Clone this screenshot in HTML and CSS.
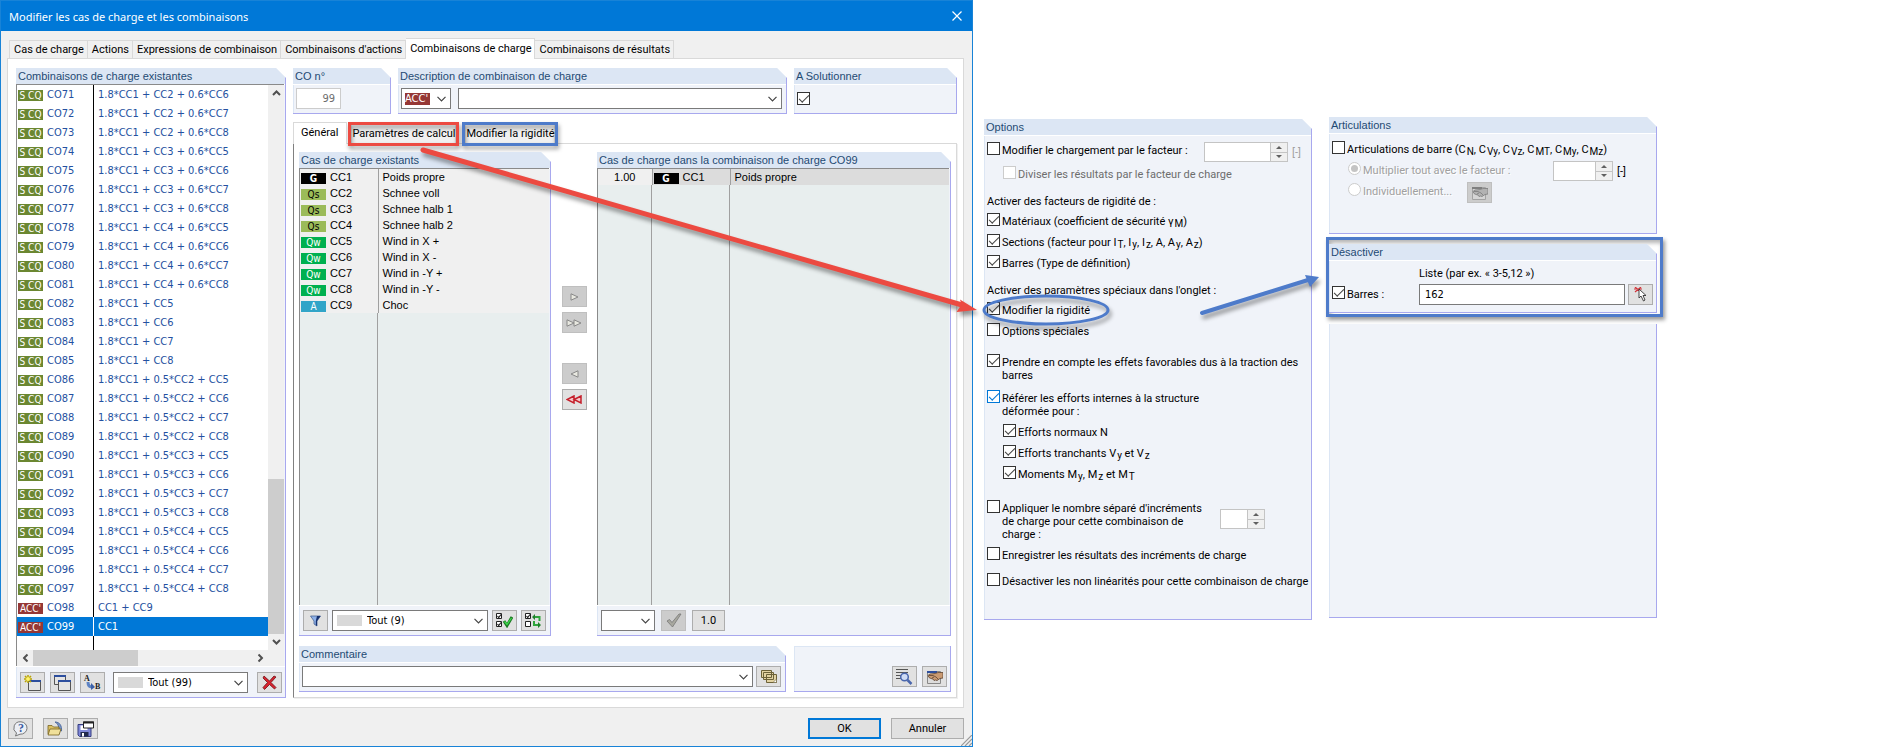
FILE: index.html
```
<!DOCTYPE html>
<html lang="fr">
<head>
    <meta charset="UTF-8">
    <meta name="viewport" content="width=device-width, initial-scale=1.0">
    <title>Modifier les cas de charge et les combinaisons</title>
    <link rel="stylesheet" href="styles.css">
</head>
<body>
    <!-- Shared icon shapes -->
    <svg class="sprite" aria-hidden="true">
        <symbol id="chevron" viewBox="0 0 9 6"><path d="M.5 .8 4.5 4.8 8.5 .8" fill="none" stroke="#444" stroke-width="1.2"/></symbol>
        <symbol id="arrow" viewBox="0 0 9 6"><path d="M1 5 4.5 1.5 8 5" fill="none" stroke="#505050" stroke-width="2"/></symbol>
        <symbol id="hand" viewBox="0 0 17 16">
            <path d="M1.500 2.500h13v12h-13z" fill="#dcdcdc" stroke="#888"/>
            <path d="M1 2h10v2H1z" fill="#2d4f9e"/>
            <path d="M17 3.500v5.500l-3 .5-3 2-1.500-.5-1.500.5-1-1.500-2-.5L3 8.500 2 6.500 4 5l5-.5 3-1z" fill="#c99a72" stroke="#5d4330" stroke-width=".8"/>
            <path d="M3 6.500h4l3 1.500 2 2M6 9l2-1" fill="none" stroke="#5d4330" stroke-width=".8"/>
        </symbol>
    </svg>

    <div class="page">
        <div class="dialog">
            <div class="title-bar">
                <h1>Modifier les cas de charge et les combinaisons</h1>
                <button class="close-btn" aria-label="Fermer">
                    <svg width="10" height="10" viewBox="0 0 10 10"><path d="M.5 .5 9.500 9.500M9.500 .5 .5 9.500" stroke="#fff" stroke-width="1.200"/></svg>
                </button>
            </div>

            <div class="tabs main-tabs">
                <button class="tab">Cas de charge</button>
                <button class="tab">Actions</button>
                <button class="tab">Expressions de combinaison</button>
                <button class="tab">Combinaisons d'actions</button>
                <button class="tab active">Combinaisons de charge</button>
                <button class="tab">Combinaisons de résultats</button>
            </div>

            <div class="pane">
                <section class="group">
                    <h2>Combinaisons de charge existantes</h2>
                    <div class="combo-list">
                        <div class="combo-view">
                            <table class="combo-table"><tbody id="combo-rows"></tbody></table>
                        </div>
                        <div class="scroll-v">
                            <button class="scroll-btn" aria-label="Haut"><svg width="9" height="6"><use href="#arrow"/></svg></button>
                            <div class="track-v"><div class="thumb-v"></div></div>
                            <button class="scroll-btn flip" aria-label="Bas"><svg width="9" height="6"><use href="#arrow"/></svg></button>
                        </div>
                        <div class="scroll-h">
                            <button class="scroll-btn turn-left" aria-label="Gauche"><svg width="9" height="6"><use href="#arrow"/></svg></button>
                            <div class="track-h"><div class="thumb-h"></div></div>
                            <button class="scroll-btn turn-right" aria-label="Droite"><svg width="9" height="6"><use href="#arrow"/></svg></button>
                        </div>
                    </div>
                    <div class="toolbar combo-toolbar">
                        <button class="icon-btn" aria-label="Nouvelle combinaison">
                            <svg width="17" height="16" viewBox="0 0 17 16"><path d="M4.500 5.500h12v10h-12z" fill="#e4e4e4" stroke="#555"/><path d="M4 5h13v2H4z" fill="#2d4f9e"/><path d="M4 0v8M0 4h8M1 1l6 6M7 1 1 7" stroke="#b9a300" stroke-width="1.500"/><circle cx="4" cy="4" r="2" fill="#fff36b"/></svg>
                        </button>
                        <button class="icon-btn" aria-label="Copier">
                            <svg width="17" height="16" viewBox="0 0 17 16"><path d="M.5 .5h11v9H.5z" fill="#e4e4e4" stroke="#555"/><path d="M0 0h12v2H0z" fill="#2d4f9e"/><path d="M4.500 5.500h12v10h-12z" fill="#e4e4e4" stroke="#555"/><path d="M4 5h13v2H4z" fill="#2d4f9e"/></svg>
                        </button>
                        <button class="icon-btn" aria-label="Renuméroter">
                            <svg width="19" height="19" viewBox="0 0 19 19"><text x="1" y="8" class="glyph">A</text><text x="12" y="16" class="glyph">B</text><path d="M5 9c0 4 2 5 4 5" fill="none" stroke="#5d83c4" stroke-width="3"/><path d="m8 10 4 4-4 3z" fill="#3a60a8"/></svg>
                        </button>
                        <label class="combo filter-combo"><span class="swatch"></span>
                            <select aria-label="Filtre des combinaisons"><option>Tout (99)</option></select>
                            <svg class="chevron" width="9" height="6"><use href="#chevron"/></svg>
                        </label>
                        <button class="icon-btn" aria-label="Supprimer">
                            <svg width="15" height="15" viewBox="0 0 15 15"><path d="m2 1 5.500 5L12 1l2 1-5 5.500 5 5-1.500 1.500-5-4.500-5 5L1 12.500l4.500-5L1 3z" fill="#d8232e" stroke="#6d1217" stroke-width=".8"/></svg>
                        </button>
                    </div>
                </section>

                <div class="details">
                    <div class="top-row">
                        <section class="group">
                            <h2><label for="co-number">CO n°</label></h2>
                            <div class="field-row"><input id="co-number" class="text-input number" value="99" disabled></div>
                        </section>
                        <section class="group">
                            <h2>Description de combinaison de charge</h2>
                            <div class="field-row">
                                <label class="combo code-combo">
                                    <select class="code-select" aria-label="Type"><option>ACC'</option></select>
                                    <svg class="chevron" width="9" height="6"><use href="#chevron"/></svg>
                                </label>
                                <label class="combo fill">
                                    <input aria-label="Description">
                                    <svg class="chevron" width="9" height="6"><use href="#chevron"/></svg>
                                </label>
                            </div>
                        </section>
                        <section class="group">
                            <h2><label for="solve">A Solutionner</label></h2>
                            <div class="field-row solve-row"><input type="checkbox" id="solve" checked></div>
                        </section>
                    </div>

                    <div class="tabs inner-tabs">
                        <button class="tab active">Général</button>
                        <button class="tab mark-red">Paramètres de calcul</button>
                        <button class="tab mark-blue">Modifier la rigidité</button>
                    </div>

                    <div class="inner-pane">
                        <div class="cases">
                            <section class="group">
                                <h2>Cas de charge existants</h2>
                                <div class="case-view two-cols">
                                    <table class="case-table"><tbody id="case-rows"></tbody></table>
                                </div>
                                <div class="toolbar">
                                    <button class="icon-btn" aria-label="Filtrer">
                                        <svg width="11" height="12" viewBox="0 0 11 12"><path d="M.5 1h10L7 6v5l-3-2V6z" fill="#8fb2ea" stroke="#4a6496" stroke-width=".8"/><path d="M7 1h3.500L7 6v5l-1.200-.8V6z" fill="#17306d"/></svg>
                                    </button>
                                    <label class="combo fill"><span class="swatch"></span>
                                        <select aria-label="Filtre des cas de charge"><option>Tout (9)</option></select>
                                        <svg class="chevron" width="9" height="6"><use href="#chevron"/></svg>
                                    </label>
                                    <button class="icon-btn" aria-label="Tout sélectionner">
                                        <svg width="17" height="15" viewBox="0 0 17 15"><path d="M.5 .5h5v5h-5zM.5 8.500h5v5h-5z" fill="#fff" stroke="#222"/><path d="m1.500 3 1.200 1.500L5 1.500M1.500 11l1.200 1.500L5 9.500" fill="none" stroke="#222" stroke-width="1.200"/><path d="m8 8 3 4.500L16 4" fill="none" stroke="#1c7a24" stroke-width="3"/><path d="m8.500 8.500 2.500 3L15.500 5" fill="none" stroke="#3ddb4c" stroke-width="1.200"/></svg>
                                    </button>
                                    <button class="icon-btn" aria-label="Inverser la sélection">
                                        <svg width="17" height="15" viewBox="0 0 17 15"><path d="M.5 .5h5v5h-5zM.5 8.500h5v5h-5z" fill="#fff" stroke="#222"/><path d="m1.500 3 1.200 1.500L5 1.500" fill="none" stroke="#222" stroke-width="1.200"/><path d="M9 4h5.500v4M14.500 12H9V8" fill="none" stroke="#2fa53c" stroke-width="2"/><path d="M10 1 7 4l3 3zM13 9l3 3-3 3z" fill="#1f7f2b"/></svg>
                                    </button>
                                </div>
                            </section>

                            <div class="transfer">
                                <button class="icon-btn" disabled aria-label="Ajouter"><svg width="9" height="8" viewBox="0 0 9 8"><path d="M1 .8 8 4 1 7.200z" fill="#e8e8e0" stroke="#888"/></svg></button>
                                <button class="icon-btn" disabled aria-label="Tout ajouter"><svg width="16" height="8" viewBox="0 0 16 8"><path d="M1 .8 8 4 1 7.200zM8 .8 15 4 8 7.200z" fill="#e8e8e0" stroke="#888"/></svg></button>
                                <button class="icon-btn back" disabled aria-label="Retirer"><svg width="9" height="8" viewBox="0 0 9 8"><path d="M8 .8 1 4l7 3.200z" fill="#e8e8e0" stroke="#888"/></svg></button>
                                <button class="icon-btn" aria-label="Tout retirer"><svg width="16" height="9" viewBox="0 0 16 9"><path d="M8 1 1 4.500 8 8zM15 1 8 4.500 15 8z" fill="#f6c9cb" stroke="#c5202c" stroke-width="1.500"/></svg></button>
                            </div>

                            <section class="group">
                                <h2>Cas de charge dans la combinaison de charge CO99</h2>
                                <div class="case-view three-cols">
                                    <table class="case-table">
                                        <tbody>
                                            <tr class="current">
                                                <td class="factor">1.00</td>
                                                <td class="case-id"><span class="badge g">G</span>CC1</td>
                                                <td>Poids propre</td>
                                            </tr>
                                        </tbody>
                                    </table>
                                </div>
                                <div class="toolbar factor-toolbar">
                                    <label class="combo factor-combo">
                                        <select aria-label="Facteur"><option></option></select>
                                        <svg class="chevron" width="9" height="6"><use href="#chevron"/></svg>
                                    </label>
                                    <button class="icon-btn" disabled aria-label="Appliquer">
                                        <svg width="16" height="15" viewBox="0 0 16 15"><path d="m1 8 2.500-1.500L6 9.500 13 1h2L6.500 14z" fill="#a8a89f" stroke="#777" stroke-width=".8"/></svg>
                                    </button>
                                    <button class="icon-btn factor-btn">1.0</button>
                                </div>
                            </section>
                        </div>

                        <div class="comment-row">
                            <section class="group">
                                <h2><label for="comment">Commentaire</label></h2>
                                <div class="field-row comment-field">
                                    <div class="combo fill">
                                        <input id="comment">
                                        <svg class="chevron" width="9" height="6"><use href="#chevron"/></svg>
                                    </div>
                                    <button class="icon-btn" aria-label="Commentaires enregistrés">
                                        <svg width="16" height="13" viewBox="0 0 16 13"><path d="M.5 .5h10v7H.5zM2.500 2.500h10v7h-10zM5.500 4.500h10v8h-10z" fill="#e3d3a2" stroke="#6d6238"/><path d="m12 12.500 3.500-3.500v3.500z" fill="#fff" stroke="#6d6238" stroke-width=".6"/></svg>
                                    </button>
                                </div>
                            </section>
                            <section class="group actions-group">
                                <button class="icon-btn" aria-label="Détails">
                                    <svg width="17" height="16" viewBox="0 0 17 16"><path d="M0 .5h12M0 3.500h12M0 6.500h6M0 9.500h5" stroke="#555"/><circle cx="8.500" cy="8" r="3.800" fill="#cfdcf5" stroke="#4a67ad" stroke-width="1.500"/><path d="m11.500 11 4 4" stroke="#4a67ad" stroke-width="2.500"/></svg>
                                </button>
                                <button class="icon-btn" aria-label="Modifier"><svg width="17" height="16"><use href="#hand"/></svg></button>
                            </section>
                        </div>
                    </div>
                </div>
            </div>

            <div class="bottom-bar">
                <button class="icon-btn help-btn" aria-label="Aide">
                    <svg width="16" height="16" viewBox="0 0 16 16"><path d="M8 .8a6.500 6.200 0 1 1-1 12.400L2.500 15l1-3A6.500 6.200 0 0 1 8 .8z" fill="#eceff5" stroke="#777"/><text x="5" y="11" class="glyph help-mark">?</text></svg>
                </button>
                <button class="icon-btn" aria-label="Ouvrir">
                    <svg width="17" height="16" viewBox="0 0 17 16"><path d="M8 1c5 0 7 4 6.500 9l-3-1C12 5 11 2.500 8 1z" fill="#7c98c9" stroke="#3d5c93" stroke-width=".8"/><path d="M1 4.500h4l1.500 1.500H12v7H1z" fill="#d9bf62" stroke="#776322" stroke-width=".8"/><path d="M3 8h11l-2 6H1z" fill="#f0e09a" stroke="#776322" stroke-width=".8"/></svg>
                </button>
                <button class="icon-btn" aria-label="Enregistrer">
                    <svg width="17" height="16" viewBox="0 0 17 16"><path d="M1 3.500h13v12H2.500L1 14z" fill="#8088d8" stroke="#343c80"/><path d="M3.500 11h8v4.500h-8z" fill="#222b4c"/><path d="M5 12h2v3.500H5z" fill="#fff"/><path d="M3.500 4.500h7V9h-7z" fill="#fff"/><path d="M6.500 1h10v6h-10z" fill="#fff" stroke="#222"/><path d="M6 .5h11v2H6z" fill="#222"/></svg>
                </button>
                <button class="text-btn default">OK</button>
                <button class="text-btn">Annuler</button>
                <svg class="grip" width="11" height="11" viewBox="0 0 11 11"><path d="M0 11 11 0M4 11l7-7M8 11l3-3" stroke="#999" stroke-width="1.200"/></svg>
            </div>
        </div>

        <section class="group options">
            <h2>Options</h2>
            <div class="options-body">
                <div class="option-row factor-row">
                    <label class="check"><input type="checkbox"><span>Modifier le chargement par le facteur :</span></label>
                    <div class="spinner"><input aria-label="Facteur de chargement" disabled><div class="steps"><button disabled aria-label="Plus"></button><button disabled aria-label="Moins"></button></div></div>
                    <span class="unit">[-]</span>
                </div>
                <label class="check nested muted tight"><input type="checkbox" disabled><span>Diviser les résultats par le facteur de charge</span></label>

                <p>Activer des facteurs de rigidité de :</p>
                <label class="check"><input type="checkbox" checked><span>Matériaux (coefficient de sécurité γ<sub>M</sub>)</span></label>
                <label class="check"><input type="checkbox" checked><span>Sections (facteur pour I<sub>T</sub>, I<sub>y</sub>, I<sub>z</sub>, A, A<sub>y</sub>, A<sub>z</sub>)</span></label>
                <label class="check"><input type="checkbox" checked><span>Barres (Type de définition)</span></label>

                <p>Activer des paramètres spéciaux dans l'onglet :</p>
                <label class="check"><input type="checkbox" checked><span>Modifier la rigidité</span></label>
                <label class="check"><input type="checkbox"><span>Options spéciales</span></label>

                <label class="check gap"><input type="checkbox" checked><span>Prendre en compte les effets favorables dus à la traction des<br>barres</span></label>
                <label class="check loose"><input type="checkbox" class="hot" checked><span>Référer les efforts internes à la structure<br>déformée pour :</span></label>
                <label class="check nested"><input type="checkbox" checked><span>Efforts normaux N</span></label>
                <label class="check nested"><input type="checkbox" checked><span>Efforts tranchants V<sub>y</sub> et V<sub>z</sub></span></label>
                <label class="check nested"><input type="checkbox" checked><span>Moments M<sub>y</sub>, M<sub>z</sub> et M<sub>T</sub></span></label>

                <div class="option-row increments">
                    <label class="check"><input type="checkbox"><span>Appliquer le nombre séparé d'incréments<br>de charge pour cette combinaison de<br>charge :</span></label>
                    <div class="spinner small"><input aria-label="Nombre d'incréments" disabled><div class="steps"><button disabled aria-label="Plus"></button><button disabled aria-label="Moins"></button></div></div>
                </div>
                <label class="check"><input type="checkbox"><span>Enregistrer les résultats des incréments de charge</span></label>
                <label class="check gap-s"><input type="checkbox"><span>Désactiver les non linéarités pour cette combinaison de charge</span></label>
            </div>
        </section>

        <div class="side">
            <section class="group hinges">
                <h2>Articulations</h2>
                <div class="hinges-body">
                    <label class="check"><input type="checkbox"><span>Articulations de barre (C<sub>N</sub>, C<sub>Vy</sub>, C<sub>Vz</sub>, C<sub>MT</sub>, C<sub>My</sub>, C<sub>Mz</sub>)</span></label>
                    <div class="option-row hinge-row">
                        <label class="check nested disabled"><input type="radio" name="hinge" checked disabled><span>Multiplier tout avec le facteur :</span></label>
                        <div class="spinner medium"><input aria-label="Facteur des articulations" disabled><div class="steps"><button disabled aria-label="Plus"></button><button disabled aria-label="Moins"></button></div></div>
                        <span class="unit">[-]</span>
                    </div>
                    <div class="option-row hinge-row single">
                        <label class="check nested disabled"><input type="radio" name="hinge" disabled><span>Individuellement...</span></label>
                        <button class="icon-btn" disabled aria-label="Modifier individuellement"><svg class="grey" width="17" height="16"><use href="#hand"/></svg></button>
                    </div>
                </div>
            </section>

            <div class="highlight">
                <section class="group">
                    <h2>Désactiver</h2>
                    <div class="members">
                        <label class="list-hint" for="members-list">Liste (par ex. « 3-5,12 »)</label>
                        <label class="check"><input type="checkbox" checked><span>Barres :</span></label>
                        <input id="members-list" class="text-input" value="162">
                        <button class="icon-btn" aria-label="Choisir graphiquement">
                            <svg width="14" height="15" viewBox="0 0 14 15"><path d="M0 2h8M1 0l6 5M7 0 1 5" stroke="#d2333a" stroke-width="1.200"/><path d="M5 2v9l2-2 2.500 5 1.500-1-2-4.500h3z" fill="#fff" stroke="#333" stroke-width=".9"/></svg>
                        </button>
                    </div>
                </section>
            </div>

            <div class="group empty"></div>
        </div>

        <!-- Callout arrows over both panels -->
        <svg class="callouts" viewBox="0 0 1900 747" preserveAspectRatio="none" aria-hidden="true">
            <g stroke="#ec4a41" fill="#ec4a41">
                <path d="M423 150 962 305" stroke-width="5" stroke-linecap="round"/>
                <path d="m977 310-17-10.500 1.500 5-5 7.500z" stroke="none"/>
            </g>
            <g stroke="#4e7bca" fill="#4e7bca">
                <path d="m1202 313 106-33" stroke-width="4" stroke-linecap="round"/>
                <path d="m1319 277-14-2 5 12z" stroke="none"/>
                <ellipse cx="1046" cy="310" rx="62" ry="14" fill="none" stroke-width="3"/>
            </g>
        </svg>
    </div>

    <script>
        // Snow cases CC2-CC4 combined with wind cases CC5-CC8
        function snowAndWind(snowFactor, windFactor) {
            const result = [];
            for (let snow = 2; snow <= 4; snow++) {
                for (let wind = 5; wind <= 8; wind++) {
                    result.push(`1.8*CC1 + ${snowFactor}CC${snow} + ${windFactor}CC${wind}`);
                }
            }
            return result;
        }

        const combos = [
            ...snowAndWind('', '0.6*').slice(1),
            ...[5, 6, 7, 8].map(wind => `1.8*CC1 + CC${wind}`),
            ...snowAndWind('0.5*', ''),
            'CC1 + CC9',
            'CC1'
        ];

        document.getElementById('combo-rows').innerHTML = combos.map((formula, i) => {
            const number = 71 + i;
            const accidental = number >= 98;
            return `
                <tr class="${number === 99 ? 'selected' : ''}">
                    <td><span class="badge ${accidental ? 'acc' : 'sco'}">${accidental ? "ACC'" : 'S CQ'}</span>CO${number}</td>
                    <td>${formula}</td>
                </tr>`;
        }).join('');

        const cases = [
            ['g', 'G', 'Poids propre'],
            ['qs', 'Qs', 'Schnee voll'],
            ['qs', 'Qs', 'Schnee halb 1'],
            ['qs', 'Qs', 'Schnee halb 2'],
            ['qw', 'Qw', 'Wind in X +'],
            ['qw', 'Qw', 'Wind in X -'],
            ['qw', 'Qw', 'Wind in -Y +'],
            ['qw', 'Qw', 'Wind in -Y -'],
            ['a', 'A', 'Choc']
        ];

        document.getElementById('case-rows').innerHTML = cases.map(([cls, code, name], i) => `
            <tr>
                <td class="case-id"><span class="badge ${cls}">${code}</span>CC${i + 1}</td>
                <td>${name}</td>
            </tr>`).join('');
    </script>
</body>
</html>
```
FILE: styles.css
```
* {
    margin: 0;
    padding: 0;
    box-sizing: border-box;
}

body {
    font-family: Roboto, sans-serif;
    font-size: 11px;
    line-height: 13px;
    color: #000;
    background: #fff;
}

button,
input,
select {
    font: inherit;
    color: inherit;
}

svg {
    display: block;
    flex: none;
}

.sprite {
    position: absolute;
    width: 0;
    height: 0;
}

.page {
    position: relative;
    display: grid;
    grid-template-columns: minmax(0, 973fr) minmax(0, 339fr) minmax(0, 345fr) minmax(0, 243fr);
    min-height: 100vh;
}

.callouts {
    position: absolute;
    inset: 0;
    width: 100%;
    height: 100%;
    pointer-events: none;
    filter: drop-shadow(2px 4px 2px rgba(0, 0, 0, 0.4));
}

/* Dialog */
.dialog {
    display: flex;
    flex-direction: column;
    border: 1px solid #1883d7;
    background: #f0f0f0;
}

.title-bar {
    display: flex;
    align-items: center;
    justify-content: space-between;
    height: 30px;
    padding: 0 10px 0 8px;
    background: #0078d7;
    color: #fff;
}

.title-bar h1 {
    font: 11px "Noto Sans", sans-serif;
}

.close-btn {
    border: none;
    background: none;
}

.tabs {
    display: flex;
    align-items: flex-end;
}

.main-tabs {
    height: 27px;
    padding-left: 8px;
}

.tab {
    position: relative;
    height: 18px;
    padding: 0 3px 0 4px;
    border: 1px solid #d9d9d9;
    border-left-width: 0;
    border-bottom: none;
    background: #f0f0f0;
    white-space: nowrap;
}

.tab:first-child {
    border-left-width: 1px;
}

.tab.active {
    z-index: 1;
    height: 21px;
    margin-bottom: -1px;
    padding-bottom: 2px;
    background: #fff;
}

.pane {
    flex: 1;
    display: grid;
    grid-template-columns: minmax(0, 270fr) minmax(0, 664fr);
    gap: 7px;
    margin: 0 8px 0 6px;
    padding: 9px 6px 9px 8px;
    border: 1px solid #d9d9d9;
    background: #fff;
}

/* Group boxes with a cut corner */
.group {
    display: flex;
    flex-direction: column;
    border: solid #a8a8ee;
    border-width: 0 1px 1px 0;
    background: #f0f3f9;
    box-shadow: inset 1px 0 #dce6f4;
    clip-path: polygon(0 0, calc(100% - 10px) 0, 100% 10px, 100% 100%, 0 100%);
}

.group h2 {
    height: 17px;
    padding-left: 2px;
    border-bottom: 1px solid #fff;
    background: #dce6f4;
    color: #1f4a73;
    font: 11px/16px "Liberation Sans", sans-serif;
    white-space: nowrap;
}

/* Combination list */
.combo-list {
    flex: 1;
    display: grid;
    grid-template-columns: minmax(0, 1fr) 16px;
    grid-template-rows: 1fr 16px;
    margin: -1px 1px 0 0;
    border: solid #8a8a8a;
    border-width: 1px 0 0 1px;
    background: #f0f0f0;
}

.combo-view {
    background: linear-gradient(#000, #000) 76px 0 / 1px 100% no-repeat #fff;
    overflow: hidden;
}

.combo-table,
.case-table {
    width: 100%;
    border-collapse: collapse;
    table-layout: fixed;
}

.combo-table {
    font-family: "DejaVu Sans Condensed", sans-serif;
}

.combo-table td {
    height: 19px;
    padding-left: 4px;
    color: #2450a0;
    white-space: nowrap;
}

.combo-table td:first-child {
    width: 77px;
    padding-left: 1px;
}

.selected {
    background: linear-gradient(#fff, #fff) 76px 0 / 1px 100% no-repeat #0078d7;
}

.combo-table .selected td {
    color: #fff;
}

.badge {
    display: inline-block;
    width: 25px;
    height: 11px;
    margin-right: 4px;
    color: #fff;
    font-size: 10px;
    line-height: 11px;
    text-align: center;
    vertical-align: middle;
}

.badge.sco { background: #6b8731; }
.badge.acc { background: #953735; }
.badge.g { background: #000; font-weight: bold; }
.badge.qs { background: #9bbb59; color: #000; }
.badge.qw { background: #00b050; }
.badge.a { background: #31a5c8; }

.scroll-v {
    display: flex;
    flex-direction: column;
}

.scroll-h {
    display: flex;
}

.scroll-btn {
    display: grid;
    place-items: center;
    width: 16px;
    height: 16px;
    border: none;
    background: #f0f0f0;
}

.flip svg { transform: rotate(180deg); }
.turn-left svg { transform: rotate(-90deg); }
.turn-right svg { transform: rotate(90deg); }

.track-v {
    flex: 1;
    display: flex;
    flex-direction: column;
    justify-content: flex-end;
}

.thumb-v {
    height: 29%;
    background: #cdcdcd;
}

.track-h {
    flex: 1;
}

.thumb-h {
    width: 48%;
    height: 16px;
    background: #cdcdcd;
}

/* Controls */
.toolbar {
    display: flex;
    gap: 4px;
    padding: 4px;
    border-top: 1px solid #fff;
}

.combo-toolbar {
    gap: 5px;
    padding: 5px 3px 4px 4px;
}

.icon-btn {
    display: grid;
    place-items: center;
    flex: none;
    width: 25px;
    height: 21px;
    border: 1px solid #adadad;
    background: #e1e1e1;
}

.icon-btn:disabled {
    border-color: #bfbfbf;
    background: #ccc;
}

.combo {
    display: flex;
    align-items: center;
    height: 21px;
    padding: 0 4px;
    border: 1px solid #7a7a7a;
    background: #fff;
}

.combo select,
.combo input {
    flex: 1;
    min-width: 0;
    height: 17px;
    border: none;
    outline: none;
    background: none;
    appearance: none;
}

.combo select,
.text-input {
    font-family: "DejaVu Sans Condensed", sans-serif;
}

.fill {
    flex: 1;
    min-width: 0;
}

.swatch {
    flex: none;
    width: 25px;
    height: 11px;
    margin-right: 5px;
    background: #d9d9d9;
}

.filter-combo {
    flex: 1;
    min-width: 0;
    margin: 0 4px 0 3px;
}

.chevron {
    pointer-events: none;
}

.glyph {
    fill: #222;
    font: bold 8px "Liberation Serif", serif;
}

.help-mark {
    fill: #3a5ba0;
    font-size: 12px;
}

.text-input {
    height: 21px;
    padding: 0 5px;
    border: 1px solid #7a7a7a;
    background: #fff;
}

.text-input:disabled {
    border-color: #ccc;
    color: #6d6d6d;
}

input[type="checkbox"],
input[type="radio"] {
    position: relative;
    flex: none;
    width: 13px;
    height: 13px;
    border: 1px solid #333;
    background: #fff;
    appearance: none;
}

input[type="checkbox"]:checked::after {
    content: "";
    position: absolute;
    left: 1px;
    top: 2px;
    width: 9px;
    height: 4px;
    border: solid #444;
    border-width: 0 0 1px 1px;
    transform: rotate(-45deg);
}

input[type="checkbox"].hot,
input[type="checkbox"].hot:checked::after {
    border-color: #0078d7;
}

input[type="checkbox"]:disabled,
input[type="radio"]:disabled {
    border-color: #ccc;
}

input[type="radio"] {
    border-radius: 50%;
}

input[type="radio"]:checked::after {
    content: "";
    position: absolute;
    inset: 2px;
    border-radius: 50%;
    background: #c4c4c4;
}

/* Right part of the dialog */
.details {
    display: flex;
    flex-direction: column;
}

.top-row {
    display: grid;
    grid-template-columns: minmax(0, 98fr) minmax(0, 389fr) minmax(0, 163fr);
    gap: 7px;
}

.field-row {
    display: flex;
    gap: 7px;
    padding: 3px 4px 4px 3px;
}

.number {
    width: 45px;
    text-align: right;
}

.code-combo {
    width: 50px;
    padding: 0 4px 0 3px;
}

.combo .code-select {
    flex: none;
    width: 25px;
    height: 12px;
    margin-right: auto;
    background: #953735;
    color: #fff;
    line-height: 12px;
}

.solve-row {
    padding-top: 7px;
}

.inner-tabs {
    height: 29px;
}

.inner-tabs .tab {
    height: 20px;
}

.inner-tabs .tab.active {
    height: 22px;
    padding: 0 8px 3px 7px;
}

.inner-tabs .mark-red,
.inner-tabs .mark-blue {
    margin-left: 4px;
    padding: 0;
    border-left-width: 1px;
}

.inner-tabs .mark-blue {
    margin-left: 9px;
}

.mark-red::after,
.mark-blue::after {
    content: "";
    position: absolute;
    inset: -2px -4px -3px;
    border: 3px solid #ec4a41;
    filter: drop-shadow(1px 3px 2px rgba(0, 0, 0, 0.4));
}

.mark-blue::after {
    border-color: #4e7bca;
}

.inner-pane {
    flex: 1;
    display: flex;
    flex-direction: column;
    gap: 10px;
    padding: 8px 5px 5px;
    border: 1px solid #d9d9d9;
    border-left-color: #808080;
    box-shadow: 1px 1px #f0f0f0;
}

.cases {
    flex: 1;
    display: grid;
    grid-template-columns: minmax(0, 252fr) 46px minmax(0, 354fr);
}

.case-view {
    flex: 1;
    margin: -1px 1px 0 0;
    border: solid #8a8a8a;
    border-width: 1px 0 0 1px;
}

.two-cols {
    background: linear-gradient(#a0a0a0, #a0a0a0) 77px 0 / 1px 100% no-repeat #e8eeee;
}

.three-cols {
    background:
        linear-gradient(#a0a0a0, #a0a0a0) 53px 0 / 1px 100% no-repeat,
        linear-gradient(#a0a0a0, #a0a0a0) 131px 0 / 1px 100% no-repeat,
        #e8eeee;
}

.case-table {
    font: 11px/14px "Liberation Sans", sans-serif;
}

.case-table tr {
    background: #f0f0f0;
}

.case-table td {
    height: 16px;
    padding-left: 4px;
    white-space: nowrap;
}

.case-table .case-id {
    width: 78px;
    padding-left: 1px;
    border-right: 1px solid #a0a0a0;
}

.case-table .current {
    background: #dcdcdc;
}

.case-table .factor {
    width: 54px;
    padding: 0;
    border-right: 1px solid #a0a0a0;
    background: #f0f0f0;
    text-align: center;
}

.case-table .badge {
    font-family: "DejaVu Sans Condensed", sans-serif;
}

.transfer {
    display: flex;
    flex-direction: column;
    align-items: center;
    gap: 5px;
    padding-top: 134px;
}

.transfer .back {
    margin-top: 25px;
}

.factor-toolbar {
    gap: 6px;
}

.factor-combo {
    width: 54px;
}

.factor-btn {
    width: 33px;
}

.comment-row {
    display: grid;
    grid-template-columns: minmax(0, 487fr) minmax(0, 157fr);
    gap: 8px;
}

.comment-field {
    gap: 3px;
}

.actions-group {
    flex-direction: row;
    align-items: flex-end;
    justify-content: flex-end;
    gap: 5px;
    padding: 0 3px 4px;
    clip-path: none;
    box-shadow: inset 1px 1px #dce6f4;
}

.bottom-bar {
    position: relative;
    display: flex;
    gap: 5px;
    padding: 10px 8px 7px 7px;
}

.help-btn {
    margin-right: 5px;
}

.text-btn {
    width: 73px;
    height: 21px;
    border: 1px solid #adadad;
    background: #e1e1e1;
}

.text-btn.default {
    margin-left: auto;
    margin-right: 5px;
    border: 2px solid #0078d7;
}

.grip {
    position: absolute;
    right: 0;
    bottom: 0;
}

/* Options panel */
.options {
    align-self: start;
    margin: 119px 0 0 11px;
}

.options-body {
    display: flex;
    flex-direction: column;
    gap: 6px;
    padding: 6px 3px 31px;
}

.options-body p {
    margin: 8px 0 -1px;
}

.check {
    display: flex;
    gap: 2px;
}

.check span {
    padding-top: 2px;
    white-space: nowrap;
}

.check sub {
    margin-left: 1px;
    font-size: 10px;
    line-height: 0;
    vertical-align: -2px;
}

.nested {
    margin-left: 16px;
}

.muted {
    color: #6d6d6d;
}

.disabled {
    color: #a0a0a0;
    text-shadow: 1px 1px #fff;
}

.tight { margin-top: -2px; }
.loose { margin-top: 2px; }
.gap-s { margin-top: 5px; }
.gap { margin-top: 10px; }

.option-row {
    display: flex;
}

.option-row .check {
    flex: 1;
}

.factor-row {
    padding-right: 2px;
}

.increments {
    margin-top: 13px;
}

.unit {
    width: 18px;
    padding: 4px 0 0 4px;
}

.factor-row .unit {
    color: #a0a0a0;
}

.spinner {
    display: flex;
    flex: none;
    width: 84px;
    height: 20px;
    border: 1px solid #c4c4c4;
    background: #fff;
}

.spinner input {
    flex: 1;
    min-width: 0;
    border: none;
    background: none;
}

.spinner.small {
    width: 45px;
    margin: 9px 43px 0 0;
}

.spinner.medium {
    width: 60px;
}

.steps {
    display: flex;
    flex-direction: column;
    width: 17px;
    border-left: 1px solid #c4c4c4;
    background: #f0f0f0;
}

.steps button {
    flex: 1;
    display: grid;
    place-items: center;
    border: none;
    background: none;
}

.steps button + button {
    border-top: 1px solid #c4c4c4;
}

.steps button::after {
    content: "";
    border: solid transparent;
    border-width: 0 3px 3px;
    border-bottom-color: #606060;
}

.steps button + button::after {
    border-width: 3px 3px 0;
    border-top-color: #606060;
}

/* Articulations and deactivation */
.side {
    display: flex;
    flex-direction: column;
    padding: 117px 0 0 17px;
}

.hinges-body {
    display: flex;
    flex-direction: column;
    gap: 5px;
    padding: 7px 3px 30px;
}

.hinge-row {
    padding-right: 22px;
}

.hinge-row .check {
    padding-top: 1px;
}

.single {
    gap: 15px;
    margin-top: -4px;
}

.single .check {
    flex: none;
}

.grey {
    filter: grayscale(1);
    opacity: 0.6;
}

.highlight {
    margin: 3px -6px 7px -3px;
    padding: 4px 3px 1px 0;
    border: 3px solid #4e7bca;
    box-shadow: 2px 3px 4px rgba(0, 0, 0, 0.4), inset 2px 3px 4px rgba(0, 0, 0, 0.3);
}

.members {
    display: grid;
    grid-template-columns: 84px minmax(0, 1fr) 25px;
    column-gap: 3px;
    row-gap: 4px;
    padding: 6px 3px 7px;
}

.list-hint {
    grid-column: 2 / 4;
}

.members .check {
    grid-column: 1;
    padding-top: 2px;
}

.empty {
    height: 294px;
    clip-path: none;
}
```
